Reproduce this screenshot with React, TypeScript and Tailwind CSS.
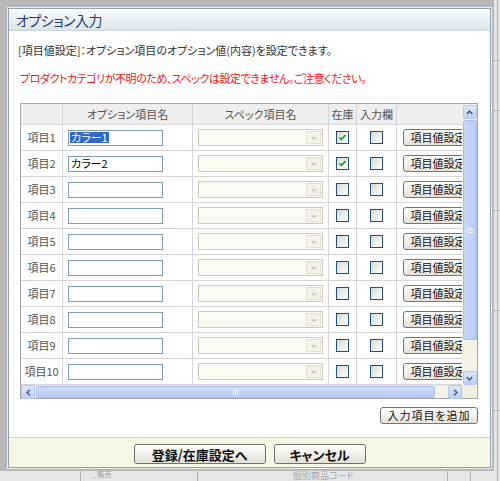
import React from 'react';

type Row = { label: string; value: string; stock: boolean };

const rows: Row[] = [
  { label: '項目1', value: 'カラー1', stock: true },
  { label: '項目2', value: 'カラー2', stock: true },
  { label: '項目3', value: '', stock: false },
  { label: '項目4', value: '', stock: false },
  { label: '項目5', value: '', stock: false },
  { label: '項目6', value: '', stock: false },
  { label: '項目7', value: '', stock: false },
  { label: '項目8', value: '', stock: false },
  { label: '項目9', value: '', stock: false },
  { label: '項目10', value: '', stock: false },
];

function Check({ checked }: { checked?: boolean }) {
  return (
    <span className="flex h-[13px] w-[13px] items-center justify-center border border-[#1c5180] bg-linear-to-br from-[#d9d9d3] to-white">
      {checked && (
        <svg viewBox="0 0 11 11" className="h-[9px] w-[9px]">
          <path d="M1.8 5.4l2.4 2.4L9.2 2.6" fill="none" stroke="#21a121" strokeWidth="2" />
        </svg>
      )}
    </span>
  );
}

function Arrow({ dir }: { dir: 'up' | 'down' | 'left' | 'right' }) {
  const d = {
    up: 'M2 6.5L5 3.5L8 6.5',
    down: 'M2 3.5L5 6.5L8 3.5',
    left: 'M6.5 2L3.5 5L6.5 8',
    right: 'M3.5 2L6.5 5L3.5 8',
  }[dir];
  return (
    <span className="flex h-[14px] w-[14px] items-center justify-center rounded-[2px] border border-[#b7c9f3] bg-linear-to-b from-[#dde7fe] to-[#bccffb]">
      <svg viewBox="0 0 10 10" className="h-[9px] w-[9px]">
        <path d={d} fill="none" stroke="#4d6185" strokeWidth="1.8" />
      </svg>
    </span>
  );
}

function SmallButton({ children, className = '' }: { children: React.ReactNode; className?: string }) {
  return (
    <button
      className={`flex h-[17px] items-center justify-center rounded-[3px] border border-[#767676] bg-linear-to-b from-white to-[#e4e2d8] text-[11px] leading-none text-[#111] ${className}`}
    >
      {children}
    </button>
  );
}

export default function App() {
  return (
    <div className="relative h-[481px] w-[500px] overflow-hidden bg-[#e6e6e6] font-['Noto_Sans_CJK_JP','Noto_Sans',sans-serif] [font-feature-settings:'palt']">
      {/* page behind the dialog */}
      <div className="absolute left-[497px] top-0 h-full w-px bg-[#b5b5b5]" />
      <div className="absolute left-[494px] top-[60px] h-px w-[6px] bg-[#bdbdbd]" />
      <div className="absolute left-[494px] top-[110px] h-px w-[6px] bg-[#bdbdbd]" />
      <div className="absolute left-[494px] top-[210px] h-px w-[6px] bg-[#bdbdbd]" />
      <div className="absolute left-[494px] top-[310px] h-px w-[6px] bg-[#bdbdbd]" />
      <div className="absolute left-[494px] top-[410px] h-px w-[6px] bg-[#bdbdbd]" />
      <div className="absolute left-[80px] top-[471px] h-[10px] w-px bg-[#b5b5b5]" />
      <div className="absolute left-[197px] top-[471px] h-[10px] w-px bg-[#b5b5b5]" />
      <div className="absolute left-[447px] top-[471px] h-[10px] w-px bg-[#b5b5b5]" />
      <div className="absolute left-[470px] top-[471px] h-[10px] w-px bg-[#b5b5b5]" />
      <span className="absolute left-[92px] top-[471px] text-[7px] leading-none text-[#9a9a9a]">_ 販売</span>
      <span className="absolute left-[293px] top-[471px] text-[9px] leading-none text-[#a8a8a8]">個別商品コード</span>

      {/* overlay frame */}
      <div className="absolute left-0 top-0 h-[471px] w-[494px] bg-[#b8b8b8] pl-[7px] pt-[7px]">
        <div className="h-[462px] w-[485px] border border-[#ececec]">
          <div className="flex h-[460px] w-[483px] flex-col border border-[#8ea3b6] bg-white">
            {/* title */}
            <div className="flex h-[22px] shrink-0 items-center border-b border-[#c9d6dc] bg-linear-to-b from-[#fbfcfc] to-[#dbe5e9] pl-[7px]">
              <span className="text-[14px] leading-none tracking-[-0.5px] text-[#1f3c78]">オプション入力</span>
            </div>

            {/* body */}
            <div className="flex flex-1 flex-col px-[11px] pt-[12px]">
              <p className="ml-[-2px] text-[11px] leading-[14px] text-[#333]">
                [項目値設定]：オプション項目のオプション値(内容)を設定できます。
              </p>
              <p className="mt-[14px] text-[11px] leading-[14px] tracking-[-0.45px] text-[#ff1010]">
                プロダクトカテゴリが不明のため、スペックは設定できません。ご注意ください。
              </p>

              <div className="mt-[18px] w-[458px] border border-[#a6a6a6]">
                <div className="flex">
                  <div className="w-[441px] overflow-hidden">
                    <div className="w-[500px]">
                      <div className="flex h-[21px] border-b border-[#d6d6d6] bg-[#efefef] text-[11px] text-[#555]">
                        <div className="w-[42px] shrink-0 border-r border-[#d6d6d6]" />
                        <div className="flex w-[130px] shrink-0 items-center justify-center border-r border-[#d6d6d6]">オプション項目名</div>
                        <div className="flex w-[136px] shrink-0 items-center justify-center border-r border-[#d6d6d6]">スペック項目名</div>
                        <div className="flex w-[28px] shrink-0 items-center justify-center border-r border-[#d6d6d6]">在庫</div>
                        <div className="flex w-[40px] shrink-0 items-center justify-center border-r border-[#d6d6d6]">入力欄</div>
                        <div className="w-[80px] shrink-0" />
                      </div>
                      {rows.map((r, i) => (
                        <div key={r.label} className="flex h-[26px] border-b border-[#d6d6d6] text-[11px]">
                          <div className="flex w-[42px] shrink-0 items-center justify-center border-r border-[#d6d6d6] text-[#555]">
                            {r.label}
                          </div>
                          <div className="flex w-[130px] shrink-0 items-center border-r border-[#d6d6d6] pl-[5px]">
                            <div className="flex h-[16px] w-[95px] items-center border border-[#7f9db9] bg-white px-[1px] text-[11px] leading-none text-black">
                              {r.value &&
                                (i === 0 ? (
                                  <span className="bg-[#3169c6] px-[1px] text-white">{r.value}</span>
                                ) : (
                                  <span className="px-[1px]">{r.value}</span>
                                ))}
                            </div>
                          </div>
                          <div className="flex w-[136px] shrink-0 items-center border-r border-[#d6d6d6] pl-[5px]">
                            <div className="flex h-[17px] w-[125px] items-center justify-end border border-[#cfccbd] bg-[#fbfaf3] p-[1px]">
                              <span className="flex h-full w-[15px] items-center justify-center border border-[#e4e1d4] bg-[#f4f2ea]">
                                <svg viewBox="0 0 10 10" className="h-[8px] w-[8px]">
                                  <path d="M2 3.5L5 6.5L8 3.5" fill="none" stroke="#c5c2b4" strokeWidth="1.5" />
                                </svg>
                              </span>
                            </div>
                          </div>
                          <div className="flex w-[28px] shrink-0 items-center justify-center border-r border-[#d6d6d6]">
                            <Check checked={r.stock} />
                          </div>
                          <div className="flex w-[40px] shrink-0 items-center justify-center border-r border-[#d6d6d6]">
                            <Check />
                          </div>
                          <div className="flex w-[80px] shrink-0 items-center pl-[6px]">
                            <SmallButton className="w-[70px] shrink-0">項目値設定</SmallButton>
                          </div>
                        </div>
                      ))}
                    </div>
                  </div>
                  {/* vertical scrollbar */}
                  <div className="flex w-[15px] flex-col items-center bg-[#f4f2e6] pt-[1px]">
                    <Arrow dir="up" />
                    <div className="mt-[1px] flex h-[220px] w-[14px] items-center justify-center rounded-[2px] border border-[#a9bff3] bg-linear-to-r from-[#c9d9fd] to-[#b7cbfb]">
                      <span className="flex flex-col gap-[1px]">
                        <span className="h-px w-[6px] bg-[#eef3ff]" />
                        <span className="h-px w-[6px] bg-[#eef3ff]" />
                        <span className="h-px w-[6px] bg-[#eef3ff]" />
                      </span>
                    </div>
                    <div className="flex-1" />
                    <Arrow dir="down" />
                  </div>
                </div>
                {/* horizontal scrollbar */}
                <div className="flex h-[13px] border-t border-[#e9e9e9]">
                  <div className="flex w-[441px] items-center bg-[#f4f2e6]">
                    <Arrow dir="left" />
                    <div className="ml-[1px] flex h-[12px] w-[399px] items-center justify-center rounded-[2px] border border-[#a9bff3] bg-linear-to-b from-[#cddcfd] to-[#b8ccfb]">
                      <span className="flex gap-[1px]">
                        <span className="h-[6px] w-px bg-[#eef3ff]" />
                        <span className="h-[6px] w-px bg-[#eef3ff]" />
                        <span className="h-[6px] w-px bg-[#eef3ff]" />
                      </span>
                    </div>
                    <div className="flex-1" />
                    <Arrow dir="right" />
                  </div>
                  <div className="w-[15px] bg-[#f1efe0]" />
                </div>
              </div>

              <div className="mt-[8px] flex w-[458px] justify-end">
                <SmallButton className="w-[98px] tracking-[1px]">入力項目を追加</SmallButton>
              </div>
            </div>

            {/* footer */}
            <div className="flex h-[30px] shrink-0 items-start justify-center gap-[8px] border-t border-[#d5d4bf] bg-[#f7f7e6] pt-[6px]">
              <button className="flex h-[20px] w-[132px] items-center justify-center rounded-[3px] border border-[#6f6f6f] bg-linear-to-b from-white to-[#e2e0d6] text-[13px] font-bold leading-none text-[#111]">
                登録/在庫設定へ
              </button>
              <button className="flex h-[20px] w-[92px] items-center justify-center rounded-[3px] border border-[#6f6f6f] bg-linear-to-b from-white to-[#e2e0d6] text-[13px] font-bold leading-none text-[#111]">
                キャンセル
              </button>
            </div>
          </div>
        </div>
      </div>
    </div>
  );
}
